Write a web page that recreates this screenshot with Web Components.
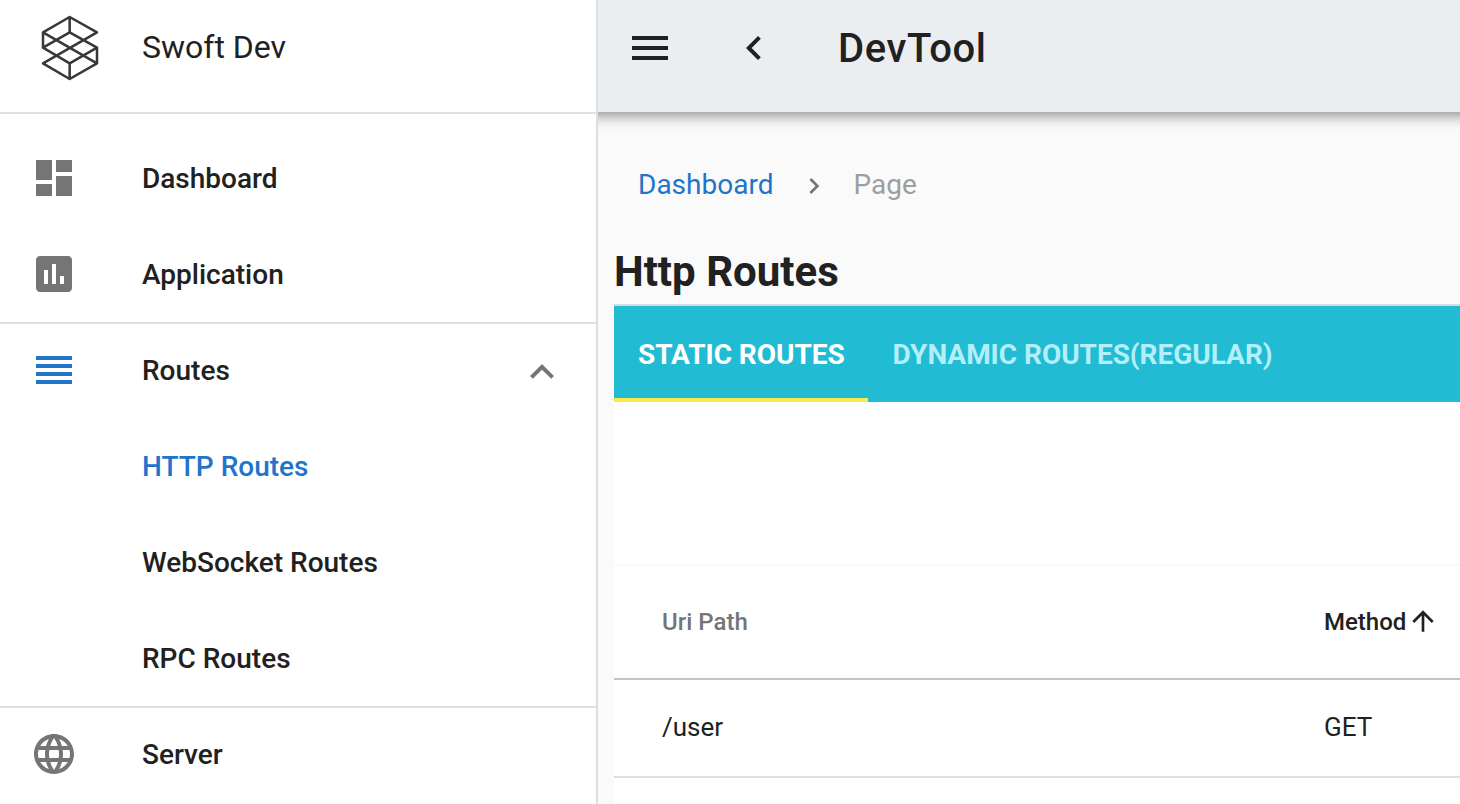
<!DOCTYPE html>
<html lang="en">
<head>
<meta charset="utf-8">
<title>Swoft DevTool</title>
<style>
html, body { margin: 0; height: 100%; overflow: hidden; background: #fafafa; }
body { font-family: Roboto, sans-serif; color: #212121; }
</style>
</head>
<body>
<dev-app></dev-app>
<script>
const define = (name, html, setup) => {
  const t = document.createElement('template');
  t.innerHTML = html;
  customElements.define(name, class extends HTMLElement {
    constructor() {
      super();
      this.attachShadow({ mode: 'open' }).append(t.content.cloneNode(true));
    }
    connectedCallback() { if (setup) setup(this, this.shadowRoot); }
  });
};

const ICONS = {
  dashboard: 'M3 13h8V3H3v10zm0 8h8v-6H3v6zm10 0h8V11h-8v10zm0-18v6h8V3h-8z',
  chart: 'M19 3H5c-1.1 0-2 .9-2 2v14c0 1.1.9 2 2 2h14c1.1 0 2-.9 2-2V5c0-1.1-.9-2-2-2zM9 17H7v-7h2v7zm4 0h-2V7h2v10zm4 0h-2v-4h2v4z',
  rows: 'M3 15h18v-2H3v2zm0 4h18v-2H3v2zm0-8h18V9H3v2zm0-6v2h18V5H3z',
  globe: 'M11.99 2C6.47 2 2 6.48 2 12s4.47 10 9.99 10C17.52 22 22 17.52 22 12S17.52 2 11.99 2zm6.93 6h-2.95c-.32-1.25-.78-2.45-1.38-3.56 1.84.63 3.37 1.91 4.33 3.56zM12 4.04c.83 1.2 1.48 2.53 1.91 3.96h-3.82c.43-1.43 1.08-2.76 1.91-3.96zM4.26 14C4.1 13.36 4 12.69 4 12s.1-1.36.26-2h3.38c-.08.66-.14 1.32-.14 2 0 .68.06 1.34.14 2H4.26zm.82 2h2.95c.32 1.25.78 2.45 1.38 3.56-1.84-.63-3.37-1.9-4.33-3.56zm2.95-8H5.08c.96-1.66 2.49-2.93 4.33-3.56C8.81 5.55 8.35 6.75 8.03 8zM12 19.96c-.83-1.2-1.48-2.53-1.91-3.96h3.82c-.43 1.43-1.08 2.76-1.91 3.96zM14.34 14H9.66c-.09-.66-.16-1.32-.16-2 0-.68.07-1.35.16-2h4.68c.09.65.16 1.32.16 2 0 .68-.07 1.34-.16 2zm.25 5.56c.6-1.11 1.06-2.31 1.38-3.56h2.95c-.96 1.65-2.49 2.93-4.33 3.56zM16.36 14c.08-.66.14-1.32.14-2 0-.68-.06-1.34-.14-2h3.38c.16.64.26 1.31.26 2s-.1 1.36-.26 2h-3.38z',
  menu: 'M3 18h18v-2H3v2zm0-5h18v-2H3v2zm0-7v2h18V6H3z',
  left: 'M15.41 7.41L14 6l-6 6 6 6 1.41-1.41L10.83 12z',
  right: 'M10 6L8.59 7.41 13.17 12l-4.58 4.59L10 18l6-6z',
  less: 'M12 8l-6 6 1.41 1.41L12 10.83l4.59 4.58L18 14z',
  up: 'M4 12l1.41 1.41L11 7.83V20h2V7.83l5.58 5.59L20 12l-8-8-8 8z'
};

define('md-icon', `
<style>
:host { display: block; flex: none; width: 48px; height: 48px; }
svg { display: block; width: 100%; height: 100%; fill: currentColor; }
</style>
<svg viewBox="0 0 24 24"><path/></svg>`,
(el, root) => root.querySelector('path').setAttribute('d', ICONS[el.getAttribute('name')]));

define('swoft-logo', `
<style>
:host { display: block; width: 80px; height: 85px; }
svg { display: block; fill: none; stroke: #383838; stroke-width: 7.6; stroke-linejoin: round; stroke-linecap: round; }
</style>
<svg width="80" height="85" viewBox="0 0 240 255">
<path d="M39 128V82L119 36L201 82L39 175L119 222L201 175L39 82M119 36V82L201 128V175M119 82L39 128L119 175L201 128M119 175V222"/>
</svg>`);

define('side-header', `
<style>
:host { display: flex; box-sizing: border-box; height: 114px; border-bottom: 2px solid #dfdfdf; padding: 5px 0 0 30px; }
span { margin-left: 32px; line-height: 84px; font-size: 32px; }
</style>
<swoft-logo></swoft-logo><span><slot></slot></span>`);

define('nav-item', `
<style>
:host { display: flex; box-sizing: border-box; height: 96px; align-items: center; padding: 0 30px; font-size: 28px; font-weight: 500; }
:host([divided]) { box-shadow: inset 0 2px #dfdfdf; }
:host([active]) { color: #2274cb; }
.lead { width: 112px; flex: none; color: #757575; }
:host([accent]) .lead { color: #2274cb; }
.label { flex: 1; padding-top: 2px; line-height: 48px; white-space: nowrap; }
</style>
<div class="lead"><slot name="icon"></slot></div>
<div class="label"><slot></slot></div>
<slot name="action"></slot>`);

define('side-nav', `
<style>
:host { display: block; box-sizing: border-box; width: 598px; height: 804px; overflow: hidden; background: #fff; border-right: 2px solid #dfdfdf; }
nav { padding-top: 16px; }
.toggle { color: #757575; margin-top: 3px; }
</style>
<side-header>Swoft Dev</side-header>
<nav>
<nav-item><md-icon slot="icon" name="dashboard"></md-icon>Dashboard</nav-item>
<nav-item><md-icon slot="icon" name="chart"></md-icon>Application</nav-item>
<nav-item divided accent><md-icon slot="icon" name="rows"></md-icon>Routes<md-icon class="toggle" slot="action" name="less"></md-icon></nav-item>
<nav-item active>HTTP Routes</nav-item>
<nav-item>WebSocket Routes</nav-item>
<nav-item>RPC Routes</nav-item>
<nav-item divided><md-icon slot="icon" name="globe"></md-icon>Server</nav-item>
</nav>`);

define('top-bar', `
<style>
:host { display: flex; align-items: center; box-sizing: border-box; height: 112px; margin: 0 -24px; padding: 0 52px 16px; background: #ebeef1;
  box-shadow: 0 4px 8px -2px rgba(0,0,0,.2), 0 8px 10px 0 rgba(0,0,0,.14), 0 2px 20px 0 rgba(0,0,0,.12); }
.back { margin-left: 56px; }
h1 { margin: 2px 0 0 60px; font-size: 40px; line-height: 56px; font-weight: 500; letter-spacing: .6px; }
</style>
<md-icon name="menu"></md-icon><md-icon class="back" name="left"></md-icon>
<h1><slot></slot></h1>`);

define('bread-crumbs', `
<style>
:host { display: flex; align-items: center; height: 42px; padding: 52px 0 0 24px; font-size: 28px; line-height: 42px; }
a { color: #2274cb; }
span { color: #9e9e9e; }
md-icon { width: 32px; height: 32px; margin: 2px 23.5px 0 24.5px; color: #757575; }
</style>
<a>Dashboard</a><md-icon name="right"></md-icon><span>Page</span>`);

define('route-tabs', `
<style>
:host { display: flex; height: 96px; background: #21bbd4; border-top: 2px solid #d6dcde; font-size: 28px; font-weight: 700; line-height: 98px; letter-spacing: -.03px; color: #fff; }
div { box-sizing: border-box; height: 96px; padding: 0 24px; white-space: nowrap; }
.on { width: 254px; box-shadow: inset 0 -4px #fbe94b; }
.off { color: #b3eff9; padding-left: 24.5px; }
</style>
<div class="on">STATIC ROUTES</div><div class="off">DYNAMIC ROUTES(REGULAR)</div>`);

define('route-table', `
<style>
:host { display: block; background: #fff; height: 402px; padding-top: 162px; box-sizing: border-box; }
.row { display: grid; grid-template-columns: 662px 1fr; box-sizing: border-box; align-items: center; padding-left: 48px; }
.head { height: 116px; border-top: 2px solid #f8f8f8; border-bottom: 2px solid #c4c4c4; font-size: 24px; font-weight: 500; }
.data { height: 98px; padding-bottom: 2px; border-bottom: 2px solid #e0e0e0; font-size: 26px; }
.muted { color: #757575; }
.sort { display: flex; align-items: center; }
md-icon { width: 32px; height: 32px; margin: -3px 0 0 1px; }
</style>
<div class="row head"><span class="muted">Uri Path</span><span class="sort">Method<md-icon name="up"></md-icon></span></div>
<div class="row data"><span>/user</span><span>GET</span></div>`);

define('main-view', `
<style>
:host { display: block; min-width: 0; flex: 1; height: 804px; overflow: hidden; background: #fafafa; }
main { padding-left: 16px; }
h2 { margin: 36px 0 0; font-size: 42px; line-height: 60px; height: 62px; font-weight: 700; }
</style>
<top-bar>DevTool</top-bar>
<main>
<bread-crumbs></bread-crumbs>
<h2>Http Routes</h2>
<route-tabs></route-tabs>
<route-table></route-table>
</main>`);

define('dev-app', `
<style>:host { display: flex; width: 1460px; height: 804px; overflow: hidden; }</style>
<side-nav></side-nav><main-view></main-view>`);
</script>
</body>
</html>
